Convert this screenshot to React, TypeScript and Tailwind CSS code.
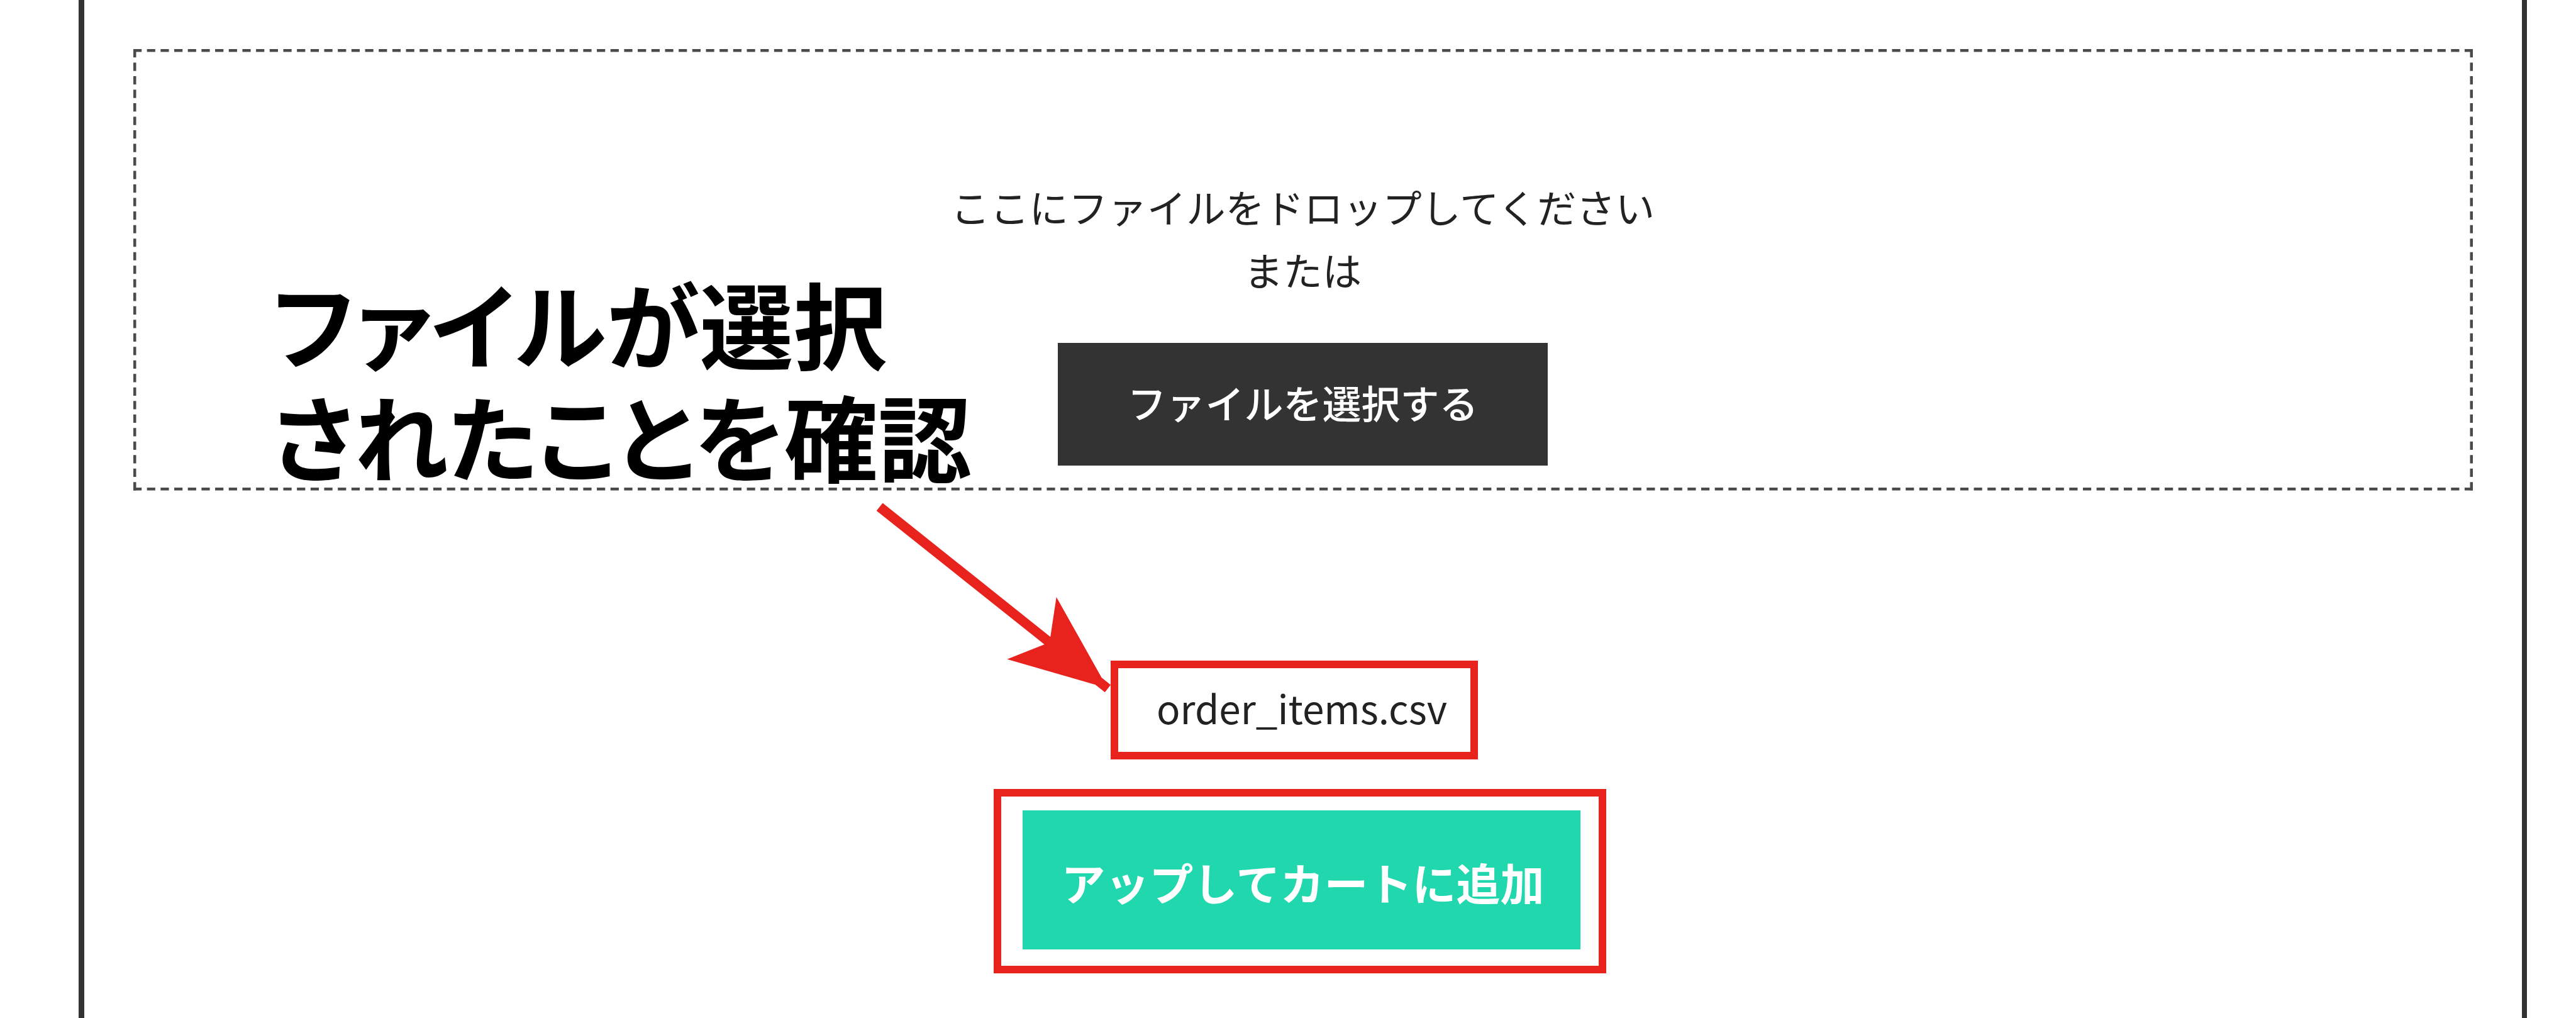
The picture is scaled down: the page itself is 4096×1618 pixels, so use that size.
import type { ReactNode } from "react";

function DashedFrame() {
  const horizontal = { strokeDasharray: "13.2 8.478" };
  const vertical = { strokeDasharray: "13.2 8.31" };

  return (
    <svg
      className="absolute inset-0"
      width="3720"
      height="702"
      stroke="#4a4a4a"
      strokeWidth="4.5"
      aria-hidden="true"
    >
      <path d="M0 2.25H3720" {...horizontal} />
      <path d="M0 699.25H3720" {...horizontal} />
      <path d="M2.25 0V701.5" {...vertical} />
      <path d="M3717.75 0V701.5" {...vertical} />
    </svg>
  );
}

function DropZone() {
  return (
    <section className="relative ml-[77.5px] mt-[77.5px] flex h-[702px] w-[3720px] flex-col items-center">
      <DashedFrame />
      <div className="mt-[200px] text-center text-[62.4px] leading-[100px] text-[#222]">
        <p>ここにファイルをドロップしてください</p>
        <p>または</p>
      </div>
      <button
        type="button"
        className="mt-[67px] h-[195px] w-[779px] bg-[#333] pb-[6px] text-[62px] leading-none font-medium text-white"
      >
        ファイルを選択する
      </button>
    </section>
  );
}

function Highlight({
  className,
  children,
}: {
  className: string;
  children: ReactNode;
}) {
  return (
    <div
      className={`flex items-center justify-center border-[12px] border-[#e8231d] ${className}`}
    >
      {children}
    </div>
  );
}

function Note() {
  return (
    <>
      <p className="absolute left-[432.5px] top-[422px] whitespace-nowrap text-[149px] leading-[179px] font-bold text-black [font-feature-settings:'palt']">
        ファイルが選択
        <br />
        されたことを確認
      </p>
      <svg
        className="absolute left-[1393px] top-[799px] fill-[#e8231d]"
        width="373.5"
        height="302"
        viewBox="1869 1072 501 405"
        aria-hidden="true"
      >
        <path d="M1883.2 1072.7 2240.8 1358 2253.6 1273 2350 1444.7 2369.4 1460.3 2357.1 1476 2336.7 1460 2148.5 1405.7 2228 1374 1869.9 1089Z" />
      </svg>
    </>
  );
}

export default function App() {
  return (
    <div
      lang="ja"
      className="relative h-[1618px] w-full overflow-hidden bg-white font-['Noto_Sans_CJK_JP',sans-serif]"
    >
      <main className="ml-[125px] flex h-full w-[3893px] flex-col border-l-[9px] border-r-[8px] border-[#333]">
        <DropZone />
        <Highlight className="ml-[1632px] mt-[270px] h-[157px] w-[584px]">
          <span className="mb-[8px] ml-[24px] text-[62px] leading-none text-[#222]">
            order_items.csv
          </span>
        </Highlight>
        <Highlight className="ml-[1446px] mt-[47px] h-[293px] w-[974px]">
          <button
            type="button"
            className="mb-[3px] ml-[5px] h-[221px] w-[887px] bg-[#20d7ae] pt-[6px] pl-[4px] text-[70px] leading-none font-bold text-white"
          >
            アップしてカートに追加
          </button>
        </Highlight>
      </main>
      <Note />
    </div>
  );
}
